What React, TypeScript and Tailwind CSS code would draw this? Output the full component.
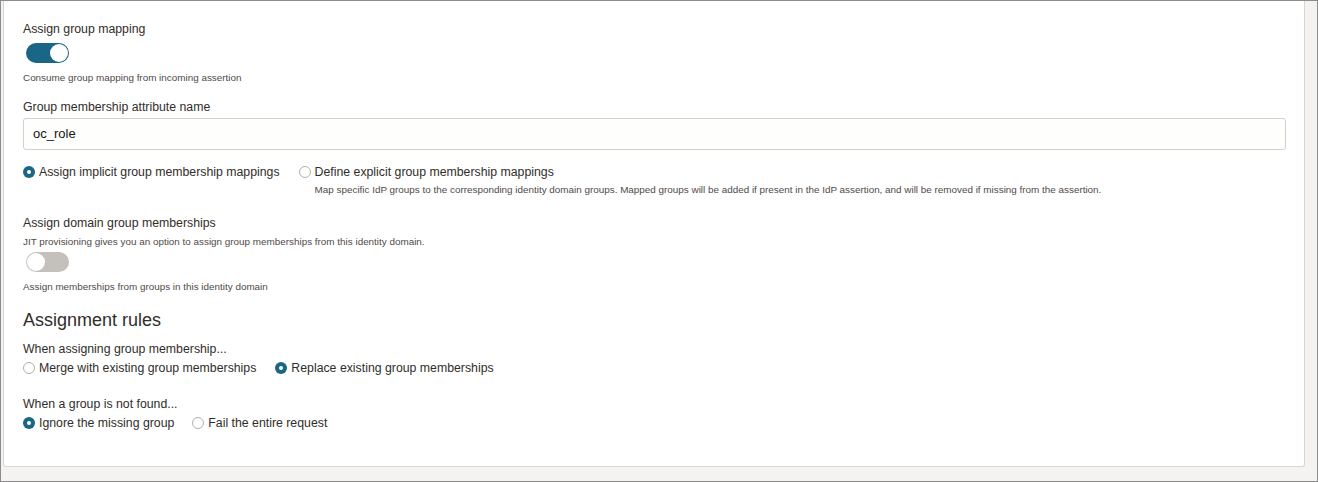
import React from "react";

const font = { fontFamily: '"Liberation Sans", Arial, sans-serif' };

function Toggle({ on }: { on: boolean }) {
  return (
    <div
      className={`flex h-[20px] w-[43px] items-center rounded-full p-px ${
        on ? "justify-end bg-[#1b6586]" : "justify-start bg-[#c4c0bc]"
      }`}
    >
      <div className="h-[18px] w-[18px] rounded-full bg-white" />
    </div>
  );
}

function Radio({ checked, label }: { checked?: boolean; label: string }) {
  return (
    <label className="flex h-[16px] items-center gap-[4px] text-[12.3px] leading-[16px] text-[#312d2a]">
      {checked ? (
        <span className="flex h-[12px] w-[12px] items-center justify-center rounded-full bg-[#1b6586]">
          <span className="h-[4px] w-[4px] rounded-full bg-white" />
        </span>
      ) : (
        <span className="h-[12px] w-[12px] rounded-full border border-[#b3afab] bg-white" />
      )}
      <span>{label}</span>
    </label>
  );
}

export default function App() {
  return (
    <div
      className="flex h-[482px] w-[1318px] border border-[#8c8c8c] bg-[#f5f3f1] pb-[14px] pl-[2px] pr-[12px]"
      style={font}
    >
      <div className="flex flex-1 flex-col rounded-b-[3px] border-x border-b border-[#d8d5d2] bg-white pl-[19px] pr-[18px] pt-[20px]">
        <div className="text-[12.3px] leading-[16px] text-[#312d2a]">Assign group mapping</div>
        <div className="mt-[6px] pl-[3px]">
          <Toggle on />
        </div>
        <div className="mt-[8px] text-[9.9px] leading-[14px] text-[#4f4a46]">
          Consume group mapping from incoming assertion
        </div>

        <div className="mt-[14px] text-[12.3px] leading-[16px] text-[#312d2a]">
          Group membership attribute name
        </div>
        <div className="mt-[3px] flex h-[32px] items-center rounded-[3px] border border-[#d3d0cd] bg-[#fefefd] px-[9px] text-[13px] text-[#161513]">
          oc_role
        </div>

        <div className="mt-[14px] flex gap-[19px]">
          <Radio checked label="Assign implicit group membership mappings" />
          <div className="flex flex-col">
            <Radio label="Define explicit group membership mappings" />
            <div className="mt-[3px] pl-[16px] text-[9.9px] leading-[14px] text-[#4f4a46]">
              Map specific IdP groups to the corresponding identity domain groups. Mapped groups will be added if
              present in the IdP assertion, and will be removed if missing from the assertion.
            </div>
          </div>
        </div>

        <div className="mt-[18px] text-[12.3px] leading-[16px] text-[#312d2a]">
          Assign domain group memberships
        </div>
        <div className="mt-[4px] text-[9.9px] leading-[14px] text-[#4f4a46]">
          JIT provisioning gives you an option to assign group memberships from this identity domain.
        </div>
        <div className="mt-[3px] pl-[3px]">
          <Toggle on={false} />
        </div>
        <div className="mt-[8px] text-[9.9px] leading-[14px] text-[#4f4a46]">
          Assign memberships from groups in this identity domain
        </div>

        <div className="mt-[14px] text-[18px] leading-[24px] text-[#312d2a]">Assignment rules</div>
        <div className="mt-[9px] text-[12.3px] leading-[16px] text-[#312d2a]">
          When assigning group membership...
        </div>
        <div className="mt-[3px] flex gap-[19px]">
          <Radio label="Merge with existing group memberships" />
          <Radio checked label="Replace existing group memberships" />
        </div>

        <div className="mt-[20px] text-[12.3px] leading-[16px] text-[#312d2a]">When a group is not found...</div>
        <div className="mt-[3px] flex gap-[18px]">
          <Radio checked label="Ignore the missing group" />
          <Radio label="Fail the entire request" />
        </div>
      </div>
    </div>
  );
}
